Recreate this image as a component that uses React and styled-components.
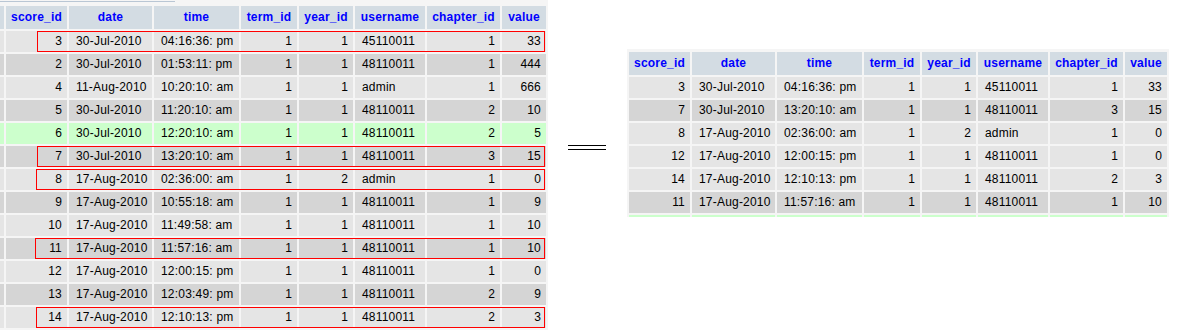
import React from 'react'
import styled, { createGlobalStyle } from 'styled-components'

const GlobalStyle = createGlobalStyle`
  html, body {
    margin: 0;
    padding: 0;
    background: #ffffff;
    overflow: hidden;
  }
  body {
    font-family: "Liberation Sans", Arial, sans-serif;
    font-size: 12px;
    color: #000000;
  }
`

const tones = {
  head: '#D3DCE3',
  odd: '#E5E5E5',
  even: '#D5D5D5',
  marked: '#CCFFCC',
}

const columns = [
  { key: 'score_id', align: 'right' },
  { key: 'date', align: 'left' },
  { key: 'time', align: 'left' },
  { key: 'term_id', align: 'right' },
  { key: 'year_id', align: 'right' },
  { key: 'username', align: 'left' },
  { key: 'chapter_id', align: 'right' },
  { key: 'value', align: 'right' },
]

const leftWidths = [61, 83, 85, 56, 54, 70, 73, 44]
const rightWidths = [61, 83, 85, 56, 54, 70, 73, 42]

const leftRows = [
  { cells: [3, '30-Jul-2010', '04:16:36: pm', 1, 1, '45110011', 1, 33], tone: 'odd', box: 37 },
  { cells: [2, '30-Jul-2010', '01:53:11: pm', 1, 1, '48110011', 1, 444], tone: 'even' },
  { cells: [4, '11-Aug-2010', '10:20:10: am', 1, 1, 'admin', 1, 666], tone: 'odd' },
  { cells: [5, '30-Jul-2010', '11:20:10: am', 1, 1, '48110011', 2, 10], tone: 'even' },
  { cells: [6, '30-Jul-2010', '12:20:10: am', 1, 1, '48110011', 2, 5], tone: 'marked' },
  { cells: [7, '30-Jul-2010', '13:20:10: am', 1, 1, '48110011', 3, 15], tone: 'even', box: 37 },
  { cells: [8, '17-Aug-2010', '02:36:00: am', 1, 2, 'admin', 1, 0], tone: 'odd', box: 36 },
  { cells: [9, '17-Aug-2010', '10:55:18: am', 1, 1, '48110011', 1, 9], tone: 'even' },
  { cells: [10, '17-Aug-2010', '11:49:58: am', 1, 1, '48110011', 1, 10], tone: 'odd' },
  { cells: [11, '17-Aug-2010', '11:57:16: am', 1, 1, '48110011', 1, 10], tone: 'even', box: 35 },
  { cells: [12, '17-Aug-2010', '12:00:15: pm', 1, 1, '48110011', 1, 0], tone: 'odd' },
  { cells: [13, '17-Aug-2010', '12:03:49: pm', 1, 1, '48110011', 2, 9], tone: 'even' },
  { cells: [14, '17-Aug-2010', '12:10:13: pm', 1, 1, '48110011', 2, 3], tone: 'odd', box: 36 },
]

const rightRows = [
  { cells: [3, '30-Jul-2010', '04:16:36: pm', 1, 1, '45110011', 1, 33], tone: 'odd' },
  { cells: [7, '30-Jul-2010', '13:20:10: am', 1, 1, '48110011', 3, 15], tone: 'even' },
  { cells: [8, '17-Aug-2010', '02:36:00: am', 1, 2, 'admin', 1, 0], tone: 'odd' },
  { cells: [12, '17-Aug-2010', '12:00:15: pm', 1, 1, '48110011', 1, 0], tone: 'odd' },
  { cells: [14, '17-Aug-2010', '12:10:13: pm', 1, 1, '48110011', 2, 3], tone: 'odd' },
  { cells: [11, '17-Aug-2010', '11:57:16: am', 1, 1, '48110011', 1, 10], tone: 'even' },
]

const Page = styled.div`
  display: flex;
  align-items: flex-start;
  width: 1177px;
  height: 330px;
  overflow: hidden;
`

const Grid = styled.div`
  display: flex;
  flex-direction: column;
  gap: 2px;
  flex: none;
  background: #f5f5f5;
  padding: ${(p) => p.$pad};
  margin-top: ${(p) => p.$top}px;
`

const CutEdge = styled.div`
  width: 175px;
  height: 1px;
  margin-bottom: 2px;
  background: #b9c6d4;
`

const Row = styled.div`
  position: relative;
  display: flex;
  gap: 2px;
  height: ${(p) => p.$h}px;
`

const Cell = styled.div`
  flex: none;
  box-sizing: border-box;
  width: ${(p) => p.$w}px;
  padding: 0 5px 0 7px;
  background: ${(p) => tones[p.$tone]};
  text-align: ${(p) => p.$align};
  line-height: ${(p) => p.$h}px;
  letter-spacing: 0.2px;
  white-space: nowrap;
  overflow: hidden;
`

const HeadCell = styled(Cell)`
  padding: 0;
  text-align: center;
  color: #0000ff;
  font-weight: bold;
`

const StubCell = styled(Cell)`
  padding: 0;
`

const Outline = styled.span`
  position: absolute;
  top: 0;
  bottom: 0;
  left: ${(p) => p.$left}px;
  right: 1px;
  border: 1px solid #ff0000;
  pointer-events: none;
`

const Equals = styled.div`
  flex: none;
  width: 38px;
  height: 3px;
  margin: 145px 21px 0 20px;
  border-top: 1px solid #000;
  border-bottom: 1px solid #000;
`

const DataTable = ({ rows, widths, stub, top, pad, edge, tail, tailTone, tailH }) => (
  <Grid $top={top} $pad={pad}>
    {edge && <CutEdge />}
    <Row $h={23}>
      {stub && <StubCell $w={4} $tone="head" $h={23} />}
      {columns.map((c, i) => (
        <HeadCell key={c.key} $w={widths[i]} $tone="head" $h={23}>
          {c.key}
        </HeadCell>
      ))}
    </Row>
    {rows.map((r, ri) => (
      <Row key={ri} $h={21}>
        {stub && <StubCell $w={4} $tone={r.tone} $h={21} />}
        {r.cells.map((v, i) => (
          <Cell key={i} $w={widths[i]} $tone={r.tone} $align={columns[i].align} $h={21}>
            {v}
          </Cell>
        ))}
        {r.box && <Outline $left={r.box} />}
      </Row>
    ))}
    {tail && (
      <Row $h={tailH}>
        {stub && <StubCell $w={4} $tone={tailTone} $h={tailH} />}
        {columns.map((c, i) => (
          <Cell key={c.key} $w={widths[i]} $tone={tailTone} $h={tailH} />
        ))}
      </Row>
    )}
  </Grid>
)

export default function App() {
  return (
    <Page>
      <GlobalStyle />
      <DataTable
        rows={leftRows}
        widths={leftWidths}
        stub
        edge
        top={0}
        pad="1px 2px 0 0"
        tail
        tailTone="even"
        tailH={3}
      />
      <Equals />
      <DataTable
        rows={rightRows}
        widths={rightWidths}
        top={49}
        pad="3px 2px 0 2px"
        tail
        tailTone="marked"
        tailH={2}
      />
    </Page>
  )
}
